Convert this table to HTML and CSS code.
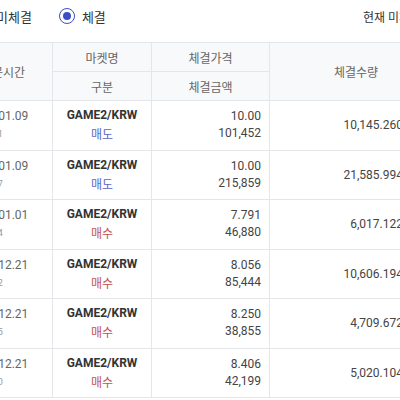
FILE: index.html
```html
<!DOCTYPE html>
<html lang="ko">
<head>
<meta charset="utf-8">
<link rel="stylesheet" href="styles.css">
</head>
<body>
<div class="page">
  <div class="topbar">
    <div class="filters">
      <label class="radio"><span class="dot"></span><span class="lbl">미체결</span></label>
      <label class="radio on"><span class="dot"></span><span class="lbl">체결</span></label>
    </div>
    <div class="note">현재 미체결 주문 기준</div>
  </div>
  <div class="grid">
    <div class="h span2">주문시간</div>
    <div class="h">마켓명</div>
    <div class="h">체결가격</div>
    <div class="h span2">체결수량</div>
    <div class="h">구분</div>
    <div class="h">체결금액</div>

    <div class="c time"><span>2024.01.09</span><span class="t">14:25:31</span></div>
    <div class="c mkt"><b>GAME2/KRW</b><span class="sell">매도</span></div>
    <div class="c num"><span>10.00</span><span>101,452</span></div>
    <div class="c qty">10,145.260</div>

    <div class="c time"><span>2024.01.09</span><span class="t">14:21:07</span></div>
    <div class="c mkt"><b>GAME2/KRW</b><span class="sell">매도</span></div>
    <div class="c num"><span>10.00</span><span>215,859</span></div>
    <div class="c qty">21,585.994</div>

    <div class="c time"><span>2024.01.01</span><span class="t">10:02:44</span></div>
    <div class="c mkt"><b>GAME2/KRW</b><span class="buy">매수</span></div>
    <div class="c num"><span>7.791</span><span>46,880</span></div>
    <div class="c qty">6,017.122</div>

    <div class="c time"><span>2023.12.21</span><span class="t">19:40:12</span></div>
    <div class="c mkt"><b>GAME2/KRW</b><span class="buy">매수</span></div>
    <div class="c num"><span>8.056</span><span>85,444</span></div>
    <div class="c qty">10,606.194</div>

    <div class="c time"><span>2023.12.21</span><span class="t">19:38:55</span></div>
    <div class="c mkt"><b>GAME2/KRW</b><span class="buy">매수</span></div>
    <div class="c num"><span>8.250</span><span>38,855</span></div>
    <div class="c qty">4,709.672</div>

    <div class="c time"><span>2023.12.21</span><span class="t">19:35:20</span></div>
    <div class="c mkt"><b>GAME2/KRW</b><span class="buy">매수</span></div>
    <div class="c num"><span>8.406</span><span>42,199</span></div>
    <div class="c qty">5,020.104</div>
  </div>
</div>
</body>
</html>
```
FILE: styles.css
```css
html, body {
  margin: 0;
  padding: 0;
  background: #fff;
  overflow: hidden;
}
body {
  font-family: Roboto, "Noto Sans CJK KR", sans-serif;
  color: #333;
}
.page {
  margin-left: -46px;
  width: 488px;
}
.topbar {
  display: grid;
  grid-template-columns: 409px auto;
  align-items: center;
  height: 32px;
  margin-bottom: 10px;
  white-space: nowrap;
}
.filters {
  display: flex;
  align-items: center;
  gap: 27px;
  padding-left: 19px;
}
.radio {
  display: flex;
  align-items: center;
  gap: 7px;
  font-size: 13px;
  color: #333;
}
.dot {
  box-sizing: border-box;
  width: 16px;
  height: 16px;
  border-radius: 50%;
  border: 1.5px solid #c5c8cf;
  display: flex;
  align-items: center;
  justify-content: center;
}
.radio.on .dot {
  border-color: #3d50c3;
}
.radio.on .dot::after {
  content: "";
  width: 8px;
  height: 8px;
  border-radius: 50%;
  background: #3d50c3;
}
.note {
  font-size: 12px;
  color: #333;
}
.grid {
  display: grid;
  grid-template-columns: 98px 98px 117px 172px;
  grid-template-rows: 28px 28px;
  grid-auto-rows: 48.5px;
  gap: 1px;
  padding: 1px 0;
  background: #e4e6ea;
}
.h {
  background: #f8f9fb;
  font-size: 12px;
  color: #666;
  display: flex;
  align-items: center;
  justify-content: center;
}
.span2 {
  grid-row: span 2;
}
.c {
  background: #fff;
  font-size: 12px;
  display: flex;
  flex-direction: column;
  justify-content: center;
}
.time {
  align-items: flex-start;
  padding-left: 14px;
  color: #666;
  line-height: 18px;
}
.time .t {
  color: #999;
  font-size: 9px;
}
.mkt {
  align-items: center;
  line-height: 20px;
}
.mkt b {
  color: #333;
  font-weight: 700;
}
.sell {
  color: #5866c4;
}
.buy {
  color: #c65050;
}
.num {
  align-items: flex-end;
  padding-right: 8px;
  line-height: 17px;
  color: #444;
}
.qty {
  align-items: flex-end;
  padding-right: 39px;
  color: #444;
}
```
